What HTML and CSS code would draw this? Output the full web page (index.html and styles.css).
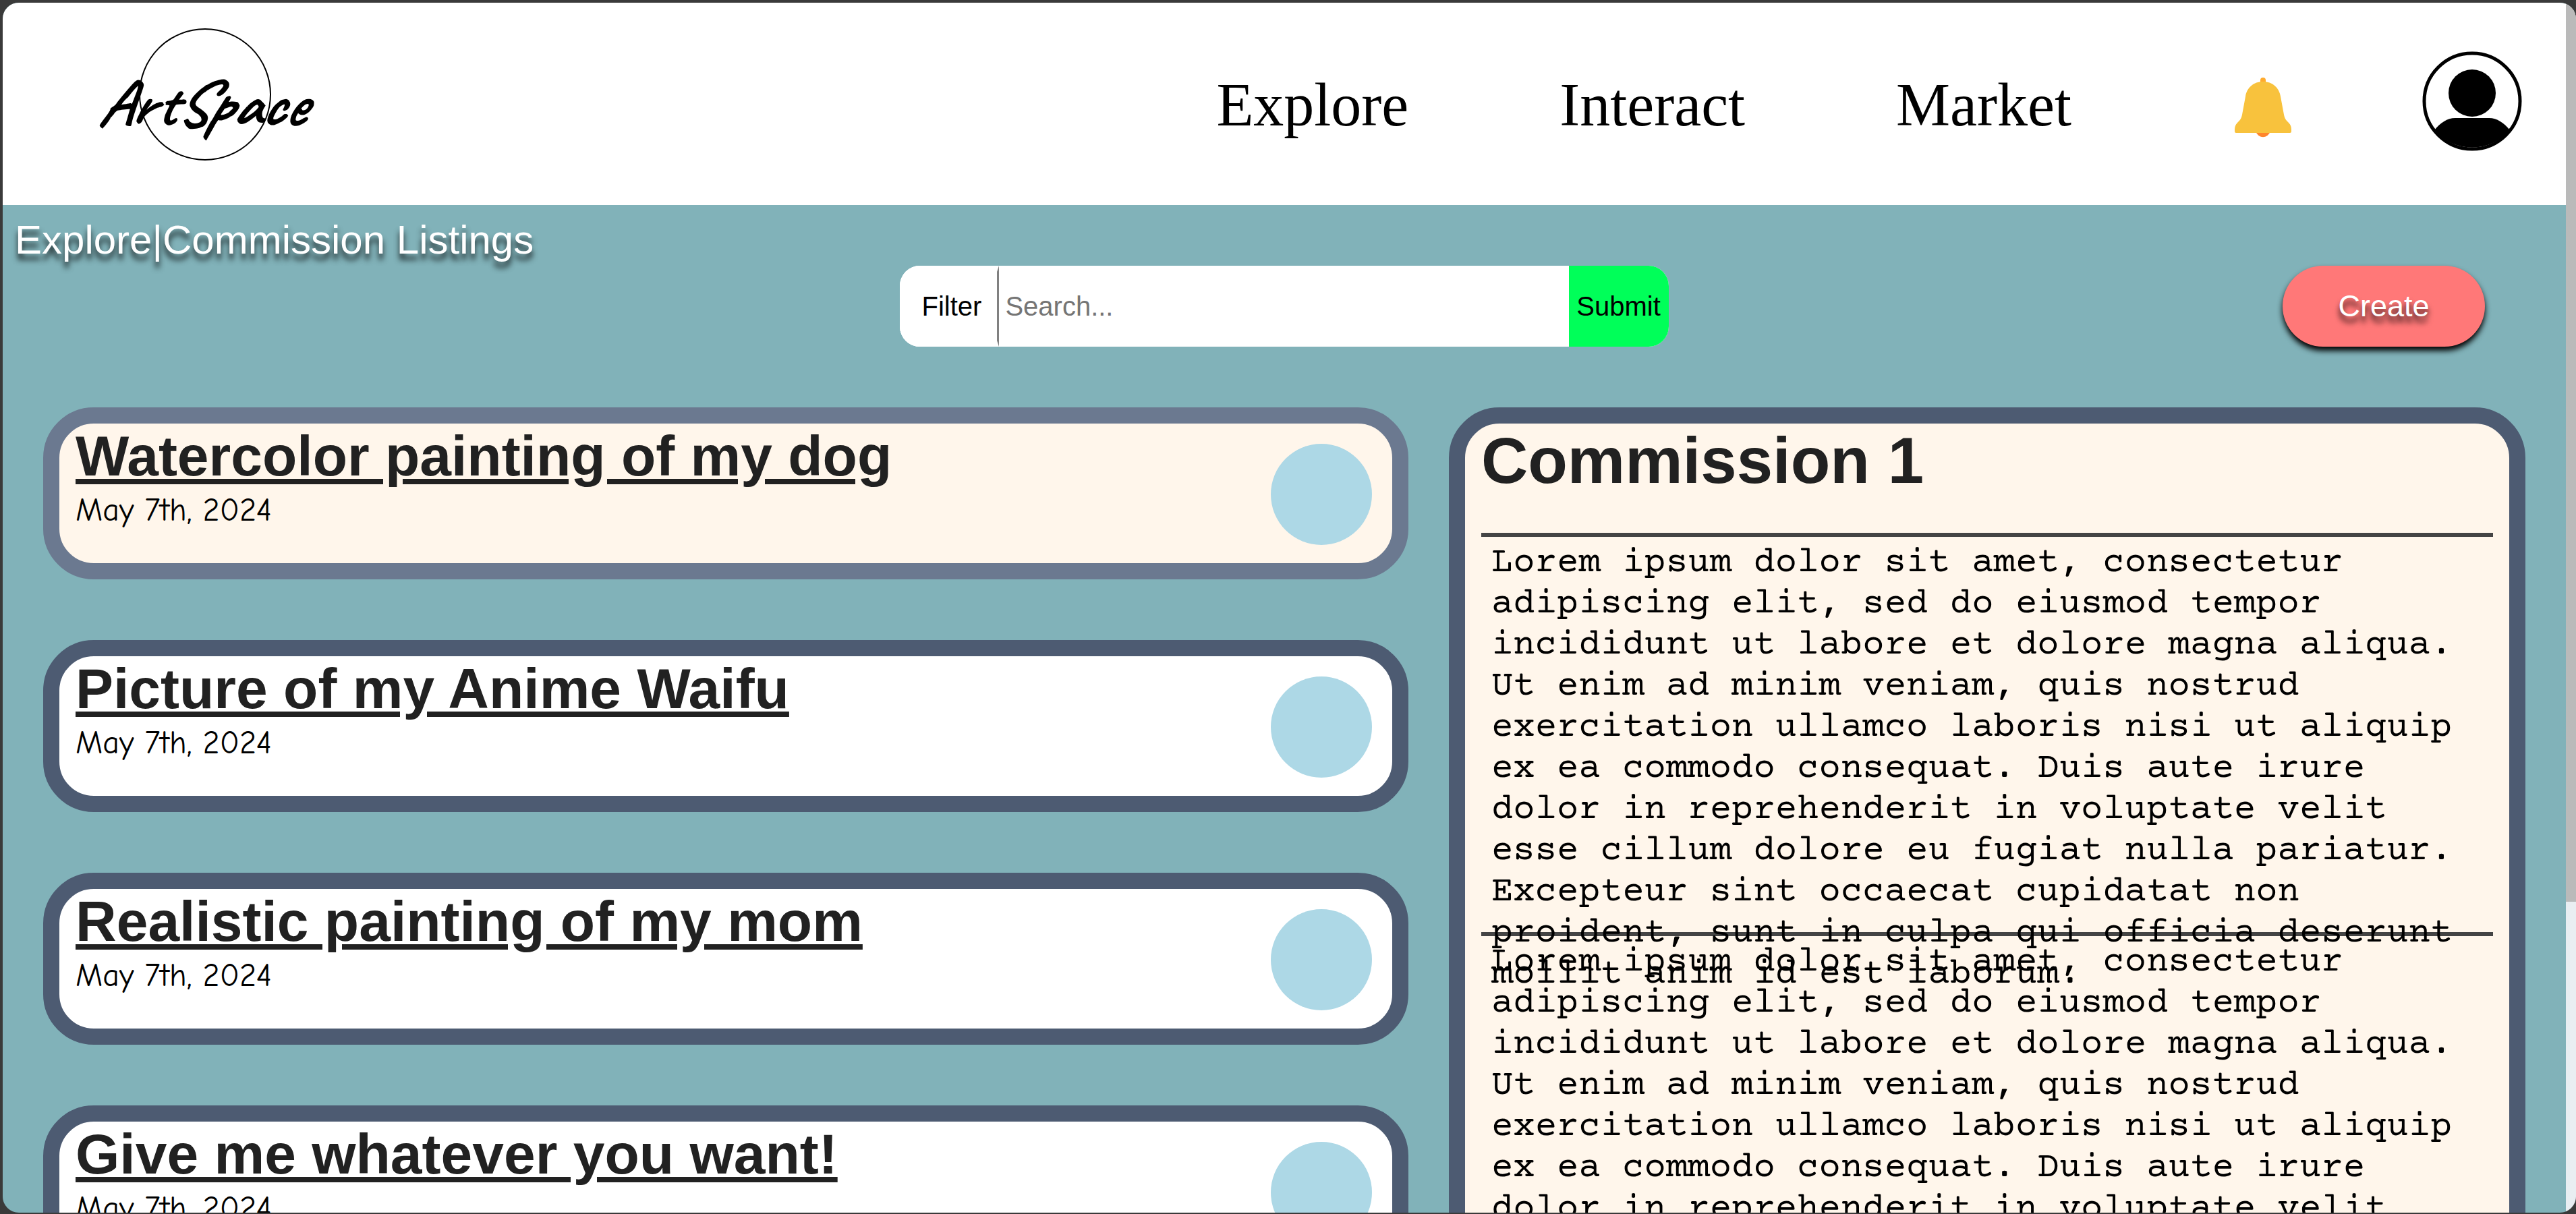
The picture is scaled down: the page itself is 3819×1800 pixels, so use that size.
FILE: index.html
```html
<!DOCTYPE html>
<html lang="en">
<head>
<meta charset="utf-8">
<title>ArtSpace - Commission Listings</title>
<link rel="stylesheet" href="styles.css">
</head>
<body>
<div class="window">
  <div class="page">
    <header class="header">
      <a class="logo" href="#" aria-label="ArtSpace home">
        <svg width="360" height="240" viewBox="0 0 360 240">
          <circle cx="160" cy="110" r="97" fill="none" stroke="#000" stroke-width="2"/>
          <text class="logo-text" x="0" y="155">ArtSpace</text>
        </svg>
      </a>
      <nav class="nav">
        <a href="#">Explore</a>
        <a href="#">Interact</a>
        <a href="#">Market</a>
        <a class="bell" href="#" aria-label="Notifications">
          <svg width="120" height="120" viewBox="0 0 120 120">
            <rect x="56" y="19" width="8" height="14" rx="4" fill="#ffab2e"/>
            <path d="M49 99c5 11 17 11 22 0z" fill="#ff852b"/>
            <path d="M60 25c14 0 24 9 26 22l5 27c1 6 4 9 7 12 3 3 4 6 4 10v3q0 2-2 2H20q-2 0-2-2v-3c0-4 1-7 4-10 3-3 6-6 7-12l5-27c2-13 12-22 26-22z" fill="#f8c23d"/>
          </svg>
        </a>
      </nav>
      <a class="avatar" href="#" aria-label="Profile">
        <svg width="148" height="148" viewBox="0 0 148 148">
          <circle cx="74" cy="74" r="71" fill="#fff" stroke="#000" stroke-width="5"/>
          <circle cx="74" cy="62" r="35" fill="#000"/>
          <path d="M49 99h50c12 0 22 7 31 18a74 74 0 0 1-112 0c9-11 19-18 31-18z" fill="#000"/>
        </svg>
      </a>
    </header>

    <main class="content">
      <div class="breadcrumb"><a href="#">Explore</a>|<a href="#">Commission Listings</a></div>
      <div class="toolbar">
        <form class="search">
          <button type="button" class="filter">Filter</button>
          <input type="text" class="query" placeholder="Search..." aria-label="Search">
          <button type="submit" class="submit">Submit</button>
        </form>
        <button type="button" class="create">Create</button>
      </div>
      <div class="columns">
        <div class="listings">
          <article class="listing selected">
            <div><h2><a href="#">Watercolor painting of my dog</a></h2><p>May 7th, 2024</p></div>
            <span class="artist"></span>
          </article>
          <article class="listing">
            <div><h2><a href="#">Picture of my Anime Waifu</a></h2><p>May 7th, 2024</p></div>
            <span class="artist"></span>
          </article>
          <article class="listing">
            <div><h2><a href="#">Realistic painting of my mom</a></h2><p>May 7th, 2024</p></div>
            <span class="artist"></span>
          </article>
          <article class="listing">
            <div><h2><a href="#">Give me whatever you want!</a></h2><p>May 7th, 2024</p></div>
            <span class="artist"></span>
          </article>
        </div>
        <section class="detail">
          <h1>Commission 1</h1>
          <div class="block"><p>Lorem ipsum dolor sit amet, consectetur adipiscing elit, sed do eiusmod tempor incididunt ut labore et dolore magna aliqua. Ut enim ad minim veniam, quis nostrud exercitation ullamco laboris nisi ut aliquip ex ea commodo consequat. Duis aute irure dolor in reprehenderit in voluptate velit esse cillum dolore eu fugiat nulla pariatur. Excepteur sint occaecat cupidatat non proident, sunt in culpa qui officia deserunt mollit anim id est laborum.</p></div>
          <div class="block"><p>Lorem ipsum dolor sit amet, consectetur adipiscing elit, sed do eiusmod tempor incididunt ut labore et dolore magna aliqua. Ut enim ad minim veniam, quis nostrud exercitation ullamco laboris nisi ut aliquip ex ea commodo consequat. Duis aute irure dolor in reprehenderit in voluptate velit esse cillum dolore eu fugiat nulla pariatur. Excepteur sint occaecat cupidatat non proident, sunt in culpa qui officia deserunt mollit anim id est laborum.</p></div>
        </section>
      </div>
    </main>
  </div>
  <div class="scrollbar"><div class="thumb"></div></div>
</div>
</body>
</html>
```
FILE: styles.css
```css
* {
  box-sizing: border-box;
}

body {
  margin: 0;
  padding: 4px 0 2px 4px;
  height: 100vh;
  background: #3a3a3a;
  font-family: "Liberation Sans", Arial, sans-serif;
  color: #000;
}

h1,
h2,
p {
  margin: 0;
}

a {
  color: inherit;
  text-decoration: none;
}

button,
input {
  border: 0;
  border-radius: 0;
  padding: 0;
  font: inherit;
  color: #000;
}

.window {
  display: flex;
  height: 100%;
  overflow: hidden;
  border-radius: 24px;
}

.page {
  flex: 1;
  min-width: 0;
  overflow: hidden;
  background: #81b2b9;
}

.scrollbar {
  width: 15px;
  background: #e9eef2;
}

.thumb {
  height: 74.3%;
  background: #bababa;
}

/* Header */

.header {
  display: flex;
  align-items: center;
  height: 300px;
  padding: 0 65px 8px 140px;
  background: #fff;
}

.logo {
  margin-right: auto;
}

.logo svg,
.bell svg,
.avatar svg {
  display: block;
}

.logo-text {
  font: italic 700 96px "Caveat", "Reenie Beanie", "Dancing Script", Lato, cursive;
}

.nav {
  display: flex;
  align-items: center;
  gap: 224px;
  padding-top: 12px;
  font: 90px/104px "Liberation Serif", "Times New Roman", serif;
}

.avatar {
  margin-left: 176px;
}

/* Toolbar */

.breadcrumb {
  padding: 17px 18px 4px;
  font-size: 60px;
  line-height: 69px;
  color: #fff;
  text-shadow: 0 9px 9px rgba(0, 0, 0, 0.8);
}

.toolbar {
  display: grid;
  grid-template-columns: 1fr 32% 1fr;
  height: 120px;
  padding-right: 120px;
  padding-left: 120px;
}

.search {
  grid-column: 2;
  display: flex;
  overflow: hidden;
  border-radius: 30px;
  background: #fff;
  font-size: 40px;
}

.filter {
  width: 147px;
  border: 9px solid #fff;
  border-right: 3px solid #808080;
  background: #fff;
}

.query {
  flex: 1;
  min-width: 0;
  padding: 0 9px;
}

.query::placeholder {
  color: #757575;
}

.submit {
  width: 148px;
  background: #00ff59;
}

.create {
  justify-self: end;
  width: 300px;
  border-radius: 60px;
  background: #ff7878;
  box-shadow: 0 6px 9px #000;
  color: #fff;
  font-size: 45px;
  text-shadow: 0 9px 9px rgba(0, 0, 0, 0.8);
}

/* Listings and detail */

.columns {
  display: grid;
  grid-template-columns: 1.268fr 1fr;
  align-items: start;
  gap: 60px;
  padding: 90px 60px;
}

.listings {
  display: grid;
  gap: 90px;
}

.listing,
.detail {
  border: 24px solid #4d5b72;
  border-radius: 75px;
}

.listing {
  display: flex;
  justify-content: space-between;
  height: 255px;
  padding: 0 30px 0 24px;
  background: #fff;
}

.listing.selected {
  border-color: #6b7990;
  background: #fff6eb;
}

.listing h2 {
  font-size: 84px;
  line-height: 97px;
  color: #212121;
}

.listing h2 a {
  text-decoration: underline;
}

.listing p {
  font: 48px/63px "Comic Neue", Lato, sans-serif;
}

.artist {
  width: 150px;
  height: 150px;
  margin-top: 30px;
  border-radius: 50%;
  background: lightblue;
}

.detail {
  padding: 0 24px 48px;
  background: #fff6eb;
}

.detail h1 {
  margin-bottom: 52px;
  font-size: 96px;
  line-height: 110px;
  color: #212121;
}

.block {
  height: 592px;
  border-top: 6px solid #444;
  padding: 9px 15px;
  font: 54px/61px "Courier Prime", "Liberation Mono", "Courier New", monospace;
}
```
